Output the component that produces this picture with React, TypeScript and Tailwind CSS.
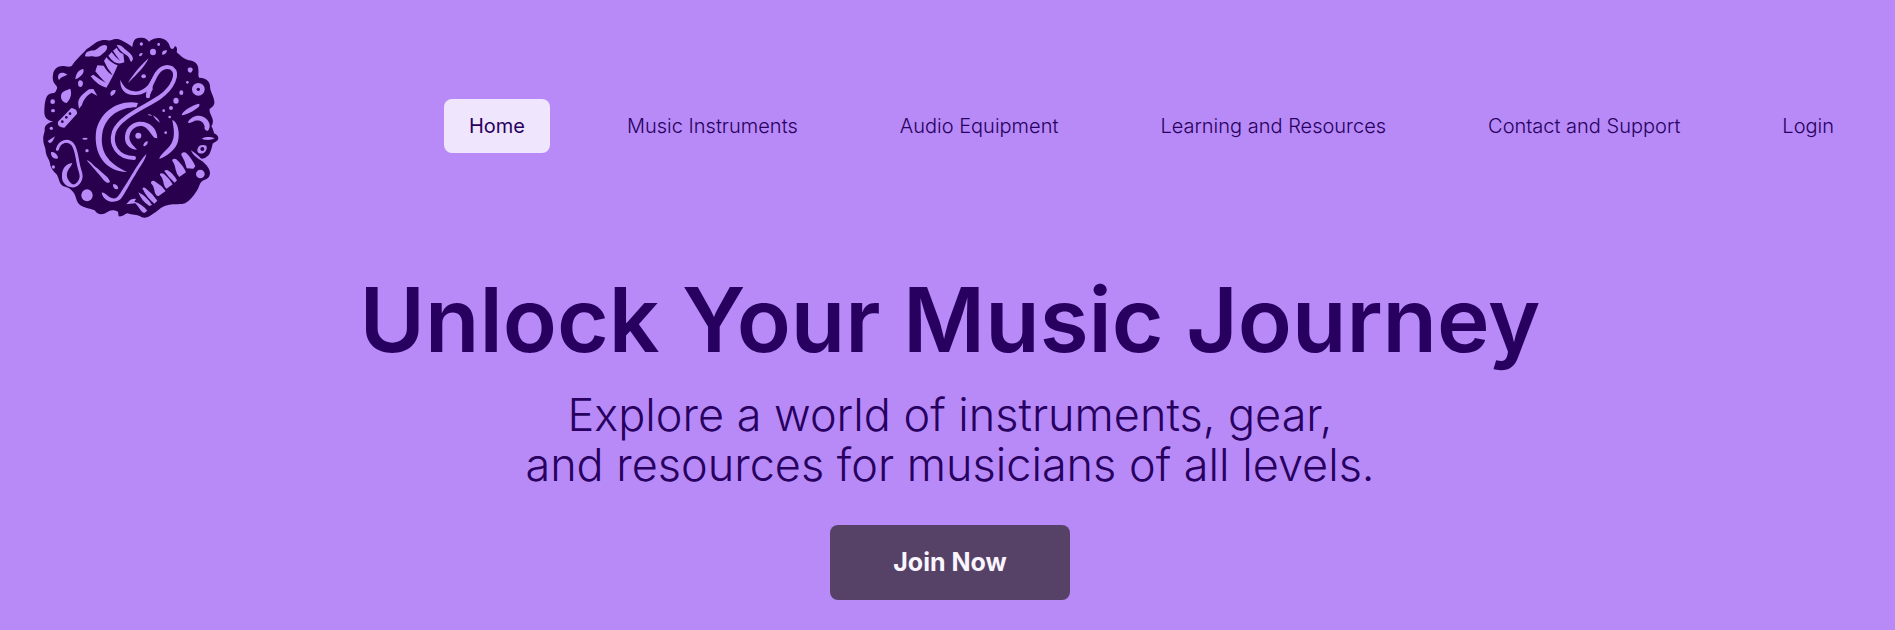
import type { ReactNode } from "react";

const links = [
  "Home",
  "Music Instruments",
  "Audio Equipment",
  "Learning and Resources",
  "Contact and Support",
  "Login",
];

function Stroke({ w, children }: { w: number; children: ReactNode }) {
  return (
    <g
      fill="none"
      stroke="#b78af7"
      strokeWidth={w}
      strokeLinecap="round"
      strokeLinejoin="round"
    >
      {children}
    </g>
  );
}

function Logo() {
  return (
    <svg viewBox="0 0 600 606" className="h-[202px] w-[200px] shrink-0" role="img" aria-label="Music store logo">
      <path
        fill="#28004d"
        d="M125 123 C140 100 160 85 170 72 C185 65 195 50 215 46 C228 43 236 48 243 46 C256 40 264 41 274 46 C285 52 296 58 307 66 C309 50 313 37 332 38 C345 37 352 43 357 50 C363 44 376 39 386 39 C401 38 418 50 420 66 C426 75 430 74 435 63 C442 66 442 75 440 82 C452 93 462 102 476 106 C492 107 505 116 505 133 C507 142 503 150 507 158 C526 157 540 168 540 184 C540 200 552 214 553 230 C554 240 547 247 539 251 C537 262 544 269 547 280 C550 288 549 298 544 304 C548 310 551 318 552 325 C560 329 566 334 565 342 C562 350 553 351 548 356 C545 368 543 378 537 389 C530 397 519 403 510 401 C522 414 540 426 540 445 C539 461 526 464 518 467 C507 474 509 485 500 498 C490 513 480 527 465 535 C446 541 430 534 412 541 C394 544 382 560 364 570 C352 578 344 580 334 576 C322 568 306 570 292 565 C283 568 277 576 266 574 L264 560 C250 554 241 554 231 562 C218 571 202 570 194 556 C176 548 154 548 144 533 C138 525 138 508 126 497 C117 486 103 487 96 481 C86 472 87 457 79 447 C71 439 61 430 60 414 C58 403 48 394 47 378 C47 366 39 357 40 344 C38 331 46 322 44 309 C46 300 55 293 70 289 C49 286 43 276 43 260 C43 241 46 213 57 208 C65 202 74 208 78 197 C82 190 83 187 79 182 C70 174 66 163 69 149 C71 129 88 120 106 124 C114 126 120 126 125 123Z"
      />
      <g fill="#b78af7">
        <path d="M165 94 C166 78 180 77 194 76 C203 73 210 60 224 60 C235 61 233 73 224 81 C214 90 207 97 194 95 C181 92 176 96 165 94Z" />
        <path d="M84 158 C83 143 97 139 112 149 C104 154 93 154 87 166Z" />
        <path d="M136 163 C137 145 148 133 160 132 C164 144 153 156 136 163Z" />
        <path d="M144 172 C148 162 157 166 159 174 C158 186 151 189 145 182Z" />
        <path d="M93 212 C94 198 108 196 121 191 C125 204 125 218 110 234 C100 231 92 225 93 212Z" />
        <ellipse cx="68" cy="230" rx="7" ry="7" />
        <ellipse cx="69" cy="257" rx="6" ry="5" />
        <path d="M182 154 L190 149 Q208 163 227 173 Q210 157 196 139 L202 121 L221 122 Q232 142 248 151 Q231 130 222 108 L229 97 Q243 114 263 121 Q247 160 229 188 Q203 182 182 154Z" />
        <path d="M235 92 L245 81 Q256 97 271 108 Q258 91 249 77 L260 68 Q268 84 280 87 L283 112 Q256 124 235 92Z" />
        <path d="M260 60 Q273 58 285 73 C296 82 309 90 309 103 L304 111 C298 106 300 98 290 91 Q270 80 260 60Z" />
        <path d="M145 239 C142 220 158 207 177 193 L190 192 L202 212 L184 203 C171 212 161 221 156 240 L147 251Z" />
        <path d="M84 290 L124 249 C133 250 142 255 141 266 L103 308 C91 307 81 303 84 290Z" />
        <path d="M241 207 C241 198 250 193 257 196 C257 205 250 212 243 213Z" />
        <path d="M53 348 C61 343 68 338 75 334 C70 345 66 355 58 354Z" />
        <circle cx="64" cy="310" r="5" />
        <path d="M63 382 C71 378 84 389 84 400 C75 405 61 396 63 382Z" />
        <circle cx="70" cy="426" r="5" />
        <ellipse cx="165" cy="341" rx="8" ry="3" />
        <circle cx="171" cy="377" r="5" />
        <ellipse cx="171" cy="511" rx="17" ry="18" />
        <path d="M249 478 C258 475 266 484 264 491 C256 496 248 489 249 478Z" />
        <path d="M170 406 C180 407 190 422 202 430 C216 445 238 457 240 471 C231 479 220 464 213 455Z" />
        <path d="M294 174 C308 150 331 121 356 100 C345 124 321 148 298 170Z" />
        <ellipse cx="341" cy="154" rx="7" ry="6" />
        <ellipse cx="334" cy="57" rx="5" ry="5" />
        <ellipse cx="386" cy="58" rx="4" ry="5" />
        <path d="M327 91 C328 84 335 82 338 85 C336 93 329 97 327 91Z" />
        <ellipse cx="369" cy="81" rx="9" ry="10" />
        <path d="M396 84 C398 76 405 75 411 76 C411 84 402 91 397 89Z" />
        <path d="M473 131 C477 126 487 126 488 133 C487 143 480 147 474 139Z" />
        <circle cx="472" cy="172" r="4" />
        <ellipse cx="454" cy="203" rx="6" ry="7" />
        <ellipse cx="438" cy="227" rx="8" ry="9" />
        <circle cx="423" cy="249" r="6" />
        <circle cx="401" cy="257" r="4" />
        <circle cx="419" cy="276" r="4" />
        <circle cx="407" cy="323" r="4" />
        <path d="M354 268 Q362 266 367 273 Q360 271 354 270Z" />
        <path d="M369 271 C379 276 386 283 390 293 C382 288 374 283 369 271Z" />
        <path d="M455 271 C455 258 488 240 506 236 C511 238 508 244 503 248 C490 258 472 268 455 271Z" />
        <path d="M473 292 C484 274 503 267 521 276 C538 285 545 304 534 317 C526 318 522 310 524 305 C521 289 507 284 493 288 C485 292 478 296 473 292Z" />
        <path d="M517 340 C527 335 543 335 554 340 C544 346 527 346 517 342Z" />
        <circle cx="505" cy="193" r="19" />
        <path d="M502 374 C505 361 515 358 529 362 C534 376 521 389 508 385 C503 383 502 379 502 374Z" />
        <ellipse cx="511" cy="447" rx="13" ry="13" />
        <path d="M427 285 C444 290 450 325 444 349 C439 374 407 396 388 402 C389 388 414 374 425 354 C437 331 430 306 427 285Z" />
        <path d="M324 234 C266 222 208 261 198 321 C191 385 224 440 291 441 C235 416 206 379 218 319 C230 272 270 247 319 247Z" />
        <path d="M382 340 C381 305 351 285 320 292 C294 298 281 324 286 348 C290 364 304 374 321 374 C311 362 298 353 298 336 C300 314 318 301 336 303 C354 307 360 325 373 338Z" />
        <ellipse cx="325" cy="332" rx="9" ry="9" />
        <path d="M340 360 C343 351 349 348 353 349 C355 357 346 365 341 364Z" />
        <path d="M349 387 C348 403 326 430 316 449 C299 475 286 504 272 522 C255 536 221 533 215 503 C225 501 233 517 248 520 C264 523 269 505 281 488 C304 455 323 414 349 387Z" />
        <path d="M483 376 C500 387 512 399 525 413 C505 403 488 391 483 376Z" />
        <path d="M454 386 Q460 380 468 383 Q486 400 496 424 L490 431 L470 430 Q466 408 454 390Z" />
        <path d="M427 404 Q432 399 439 403 Q460 422 468 442 L448 456 Q440 448 437 434 Q434 416 427 408Z" />
        <path d="M403 438 Q407 433 413 436 Q430 446 441 466 L434 473 Q416 458 403 438Z" />
        <path d="M390 446 Q395 443 402 447 Q420 462 428 478 L410 491 Q402 486 400 470 Q396 456 390 450Z" />
        <path d="M363 471 Q367 466 373 468 Q394 480 407 498 L385 514 Q374 509 373 494 Q369 480 363 475Z" />
        <path d="M337 490 Q341 486 346 489 Q368 506 382 527 L373 536 Q350 518 337 490Z" />
        <path d="M325 502 Q350 514 366 540 L358 543 Q334 528 325 502Z" />
        <path d="M289 538 C296 530 303 519 318 522 L313 530 C328 534 343 544 352 557 L343 564 C332 562 328 546 316 535Z" />
      </g>
      <Stroke w={12}>
        <path d="M312 399 C264 398 239 361 252 320 C268 276 347 246 390 216 C428 189 448 146 426 130 C407 119 386 132 374 157 C363 182 354 192 354 214" />
      </Stroke>
      <path fill="#b78af7" d="M271 164 C269 194 287 212 316 210 C343 209 354 198 367 183 L370 164 C350 186 332 204 308 198 C288 194 279 182 271 164Z" />
      <path fill="#b78af7" d="M353 183 L366 161 L368 193 L355 220 L348 216Z" />
      <Stroke w={9}>
        <path d="M82 373 C89 348 114 341 128 358 C143 377 139 407 151 440 C159 462 144 482 129 483 C107 482 96 464 102 446" />
      </Stroke>
      <path fill="#b78af7" d="M127 414 C105 416 93 436 97 457 C104 478 119 488 136 483 C117 475 105 455 113 438 C118 428 124 424 127 414Z" />
      <g fill="#28004d">
        <circle cx="505" cy="193" r="5" />
        <ellipse cx="517" cy="372" rx="6" ry="6" />
        <circle cx="97" cy="290" r="4" />
        <circle cx="109" cy="277" r="4" />
        <circle cx="120" cy="266" r="4" />
      </g>
    </svg>
  );
}

export default function App() {
  return (
    <div className="min-h-screen bg-[#b78af7] pb-[30px] font-['Inter',sans-serif] text-[#28005f]">
      <header className="flex items-center justify-between pt-[25px] pr-9 pl-[30px]">
        <a href="#home">
          <Logo />
        </a>
        <nav aria-label="Main">
          <ul className="flex items-center gap-[52px] text-xl/6 font-light whitespace-nowrap">
            {links.map((label, i) => (
              <li key={label}>
                <a
                  href={"#" + label.toLowerCase().replaceAll(" ", "-")}
                  className={
                    i === 0
                      ? "block rounded-lg bg-[#efe5fd] px-[25px] py-[15px] font-normal"
                      : "block rounded-lg px-[25px] py-[15px]"
                  }
                >
                  {label}
                </a>
              </li>
            ))}
          </ul>
        </nav>
      </header>
      <main className="flex flex-col items-center pt-[43px] pl-[5px] text-center">
        <h1 className="text-[89px]/[100px] font-semibold">Unlock Your Music Journey</h1>
        <p className="mt-5 text-[45px]/[50px] font-light">
          Explore a world of instruments, gear,
          <br />
          and resources for musicians of all levels.
        </p>
        <button
          type="button"
          className="mt-[35px] h-[75px] w-60 cursor-pointer rounded-lg bg-[#564267] text-[25px] font-bold text-[#fbf5ff]"
        >
          Join Now
        </button>
      </main>
    </div>
  );
}
